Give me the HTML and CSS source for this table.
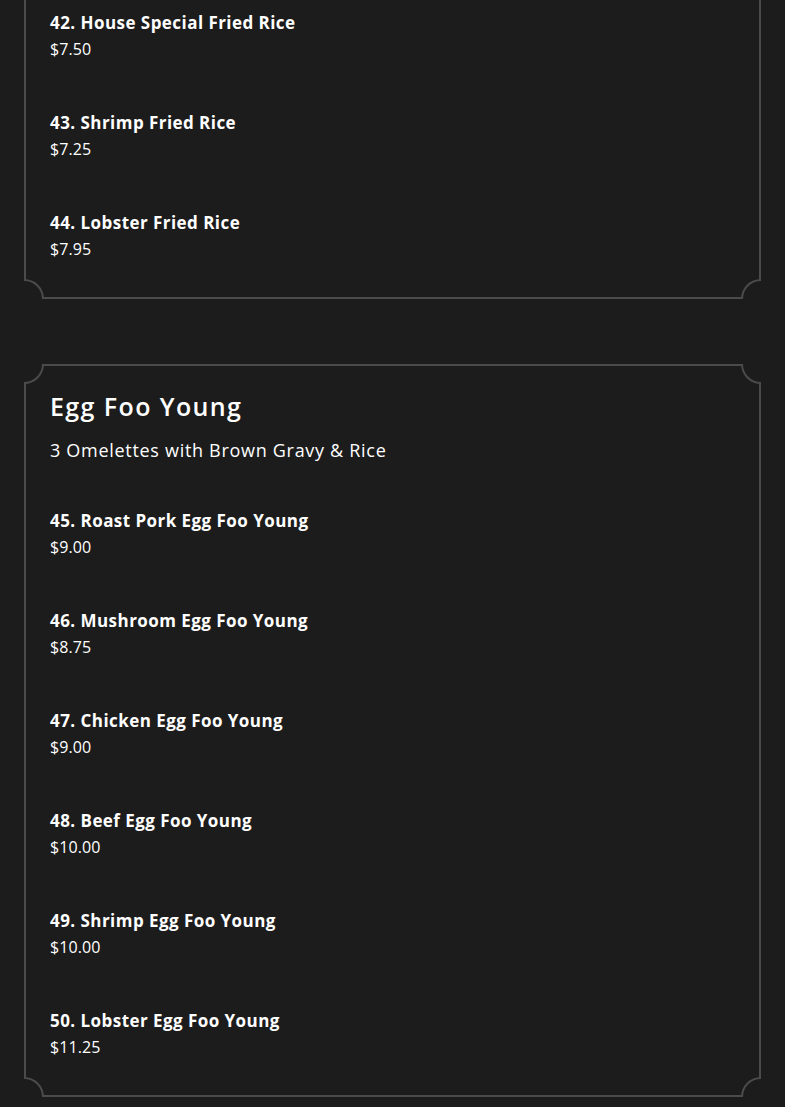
FILE: index.html
```html
<!DOCTYPE html>
<html lang="en">
<head>
<meta charset="utf-8">
<title>Menu</title>
<link rel="stylesheet" href="styles.css">
</head>
<body>
<main class="page">
  <section class="box box-first">
    <span class="corner tl"></span><span class="corner tr"></span><span class="corner bl"></span><span class="corner br"></span>
    <div class="item"><h3 class="item-name">42. House Special Fried Rice</h3><p class="item-price">$7.50</p></div>
    <div class="item"><h3 class="item-name">43. Shrimp Fried Rice</h3><p class="item-price">$7.25</p></div>
    <div class="item"><h3 class="item-name">44. Lobster Fried Rice</h3><p class="item-price">$7.95</p></div>
  </section>
  <section class="box">
    <span class="corner tl"></span><span class="corner tr"></span><span class="corner bl"></span><span class="corner br"></span>
    <h2 class="box-title">Egg Foo Young</h2>
    <p class="box-sub">3 Omelettes with Brown Gravy &amp; Rice</p>
    <div class="item"><h3 class="item-name">45. Roast Pork Egg Foo Young</h3><p class="item-price">$9.00</p></div>
    <div class="item"><h3 class="item-name">46. Mushroom Egg Foo Young</h3><p class="item-price">$8.75</p></div>
    <div class="item"><h3 class="item-name">47. Chicken Egg Foo Young</h3><p class="item-price">$9.00</p></div>
    <div class="item"><h3 class="item-name">48. Beef Egg Foo Young</h3><p class="item-price">$10.00</p></div>
    <div class="item"><h3 class="item-name">49. Shrimp Egg Foo Young</h3><p class="item-price">$10.00</p></div>
    <div class="item"><h3 class="item-name">50. Lobster Egg Foo Young</h3><p class="item-price">$11.25</p></div>
  </section>
</main>
</body>
</html>
```
FILE: styles.css
```css
html, body {
  margin: 0;
  padding: 0;
  background: #1c1c1c;
  color: #ffffff;
  font-family: "Open Sans", "Liberation Sans", sans-serif;
}
.page {
  padding: 0 24px;
  display: flex;
  flex-direction: column;
  gap: 65px;
}
.box {
  position: relative;
  border: 2px solid #4b4b4b;
  padding: 24px 24px 35px;
}
.box-first {
  margin-top: -40px;
  padding-top: 48px;
}
.corner {
  position: absolute;
  width: 18px;
  height: 18px;
  background: #1c1c1c;
  border: 0 solid #4b4b4b;
}
.corner.tl { top: -2px; left: -2px; border-right-width: 2px; border-bottom-width: 2px; border-bottom-right-radius: 20px; }
.corner.tr { top: -2px; right: -2px; border-left-width: 2px; border-bottom-width: 2px; border-bottom-left-radius: 20px; }
.corner.bl { bottom: -2px; left: -2px; border-right-width: 2px; border-top-width: 2px; border-top-right-radius: 20px; }
.corner.br { bottom: -2px; right: -2px; border-left-width: 2px; border-top-width: 2px; border-top-left-radius: 20px; }
.box-title {
  margin: 0;
  font-size: 25px;
  line-height: 32px;
  font-weight: 600;
  letter-spacing: 1.4px;
}
.box-sub {
  margin: 15px 0 45px;
  font-size: 18px;
  line-height: 26px;
  font-weight: 400;
  letter-spacing: 0.7px;
}
.item + .item { margin-top: 48px; }
.item-name {
  margin: 0;
  font-size: 17px;
  line-height: 26px;
  font-weight: 700;
  letter-spacing: 0.45px;
}
.item-price {
  margin: 0;
  font-size: 16px;
  line-height: 26px;
  font-weight: 400;
  letter-spacing: 0.1px;
}
```
